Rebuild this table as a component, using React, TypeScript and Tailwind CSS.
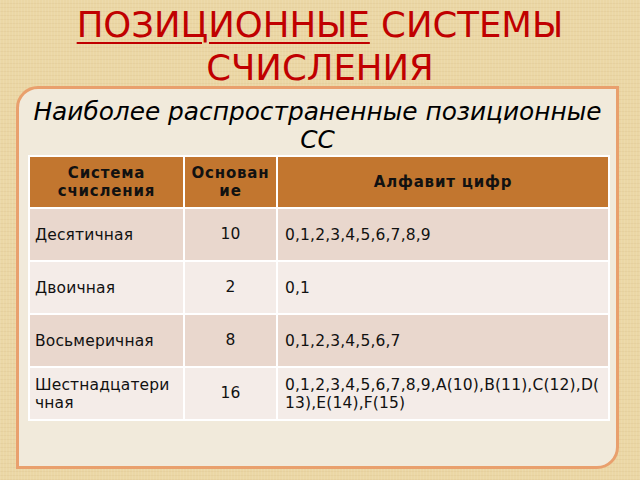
const rows = [
  { name: "Десятичная", base: "10", digits: "0,1,2,3,4,5,6,7,8,9" },
  { name: "Двоичная", base: "2", digits: "0,1" },
  { name: "Восьмеричная", base: "8", digits: "0,1,2,3,4,5,6,7" },
  {
    name: "Шестнадцатеричная",
    base: "16",
    digits: "0,1,2,3,4,5,6,7,8,9,A(10),B(11),C(12),D(13),E(14),F(15)",
  },
];

export default function App() {
  return (
    <div
      className="w-[640px] h-[480px] overflow-hidden bg-[#ebd7a5] flex flex-col items-center"
      style={{
        fontFamily: '"DejaVu Sans", Verdana, sans-serif',
        backgroundImage:
          "repeating-linear-gradient(90deg, rgba(255,255,255,0.08) 0 1px, transparent 1px 3px), repeating-linear-gradient(0deg, rgba(160,120,60,0.07) 0 1px, transparent 1px 4px)",
      }}
    >
      <h1 className="mt-[3px] text-center text-[35.5px] leading-[43px] text-[#c00000] w-[560px]">
        <span className="underline decoration-[2px] underline-offset-[5px]">ПОЗИЦИОННЫЕ</span> СИСТЕМЫ СЧИСЛЕНИЯ
      </h1>

      <div className="ml-[-5px] mt-[-3px] w-[603px] h-[383px] border-[3px] border-[#e9a06d] bg-[#f1eadb] rounded-tl-[22px] rounded-br-[22px] flex flex-col">
        <p className="pt-[9px] px-1 text-center italic text-[24.8px] leading-[28px] text-black">
          Наиболее распространенные позиционные СС
        </p>

        <table className="mt-[1px] ml-[9px] w-[580px] border-collapse table-fixed text-[15.5px] tracking-[0.15px] text-[#111]">
          <colgroup>
            <col className="w-[155px]" />
            <col className="w-[93px]" />
            <col className="w-[332px]" />
          </colgroup>
          <thead>
            <tr className="h-[52px] bg-[#c2762f]">
              <th className="border-2 border-white px-1 text-[15px] font-bold leading-[18px] tracking-[0.8px]">
                Система счисления
              </th>
              <th className="border-2 border-white px-1 text-[15px] font-bold leading-[18px] break-all tracking-[0.8px]">
                Основание
              </th>
              <th className="border-2 border-white px-1 text-[15px] font-bold leading-[18px] tracking-[0.8px]">
                Алфавит цифр
              </th>
            </tr>
          </thead>
          <tbody>
            {rows.map((r, i) => (
              <tr key={r.name} className={`h-[53px] ${i % 2 === 0 ? "bg-[#e9d7cd]" : "bg-[#f4ece8]"}`}>
                <td className="border-2 border-white pl-[5px] pr-[6px] leading-[18px] break-all">{r.name}</td>
                <td className="border-2 border-white text-center">{r.base}</td>
                <td className="border-2 border-white pl-[7px] pr-[4px] leading-[18px] break-all [line-break:anywhere]">
                  {r.digits}
                </td>
              </tr>
            ))}
          </tbody>
        </table>
      </div>
    </div>
  );
}
